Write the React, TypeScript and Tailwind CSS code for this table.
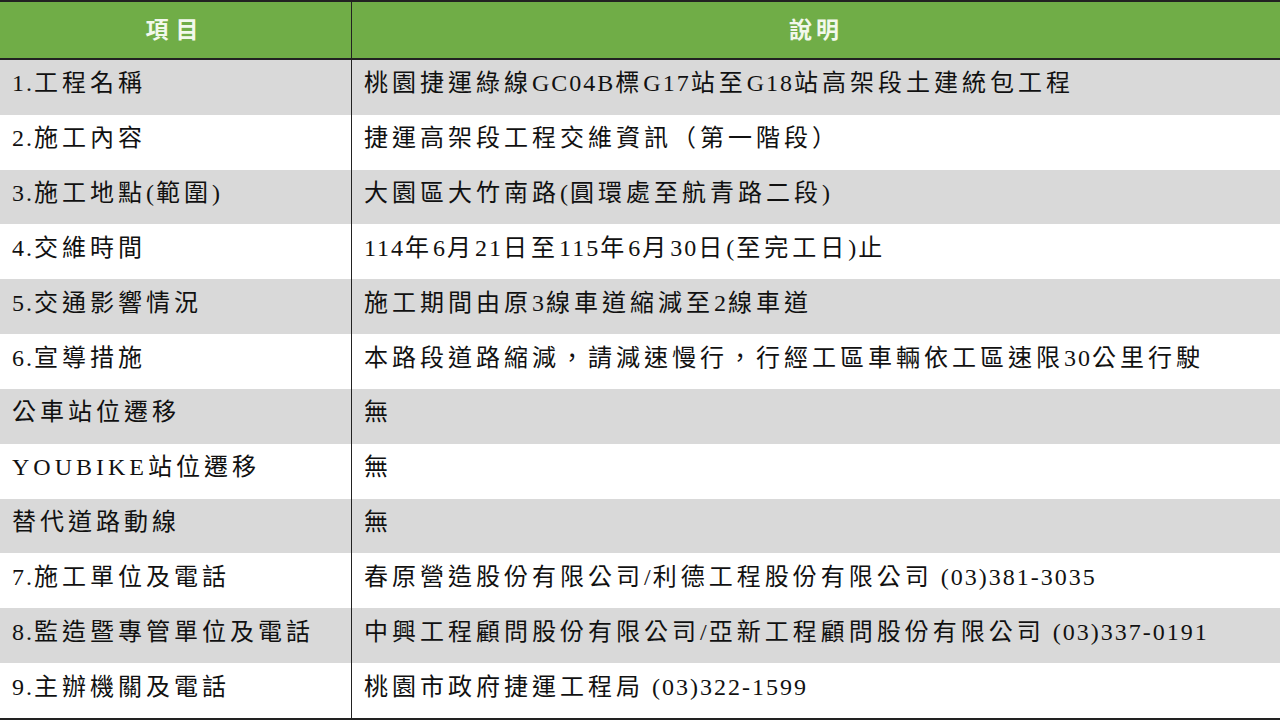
const rows: [string, string][] = [
  ["1.工程名稱", "桃園捷運綠線GC04B標G17站至G18站高架段土建統包工程"],
  ["2.施工內容", "捷運高架段工程交維資訊（第一階段）"],
  ["3.施工地點(範圍)", "大園區大竹南路(圓環處至航青路二段)"],
  ["4.交維時間", "114年6月21日至115年6月30日(至完工日)止"],
  ["5.交通影響情況", "施工期間由原3線車道縮減至2線車道"],
  ["6.宣導措施", "本路段道路縮減，請減速慢行，行經工區車輛依工區速限30公里行駛"],
  ["公車站位遷移", "無"],
  ["YOUBIKE站位遷移", "無"],
  ["替代道路動線", "無"],
  ["7.施工單位及電話", "春原營造股份有限公司/利德工程股份有限公司 (03)381-3035"],
  ["8.監造暨專管單位及電話", "中興工程顧問股份有限公司/亞新工程顧問股份有限公司 (03)337-0191"],
  ["9.主辦機關及電話", "桃園市政府捷運工程局 (03)322-1599"],
];

// latin runs are set tighter than the CJK characters
function Mixed({ text }: { text: string }) {
  const parts = text.match(/[\x20-\x7e]+|[^\x20-\x7e]+/g) ?? [];
  return (
    <span className="whitespace-pre">
      {parts.map((p, i) =>
        /^[\x20-\x7e]+$/.test(p) ? (
          <span key={i} className={/^[A-Z]+$/.test(p) ? "tracking-[4px]" : "tracking-[2px]"}>
            {p}
          </span>
        ) : (
          <span key={i} className="tracking-[4px]">
            {p}
          </span>
        )
      )}
    </span>
  );
}

export default function App() {
  return (
    <div className="w-[1280px] h-[720px] overflow-hidden bg-white flex flex-col border-t-2 border-b-2 border-[#222]">
      <div className="flex h-[58px] shrink-0 bg-[#70ad47] border-b-2 border-[#222] font-['Noto_Sans_CJK_TC',sans-serif] font-bold text-[23px] text-[#f2f8ec]">
        <div className="w-[352px] flex items-center justify-center pb-1 tracking-[7px] border-r border-[#222]">項目</div>
        <div className="flex-1 flex items-center justify-center pb-1 tracking-[4px]">說明</div>
      </div>
      {rows.map(([k, v], i) => (
        <div
          key={k}
          className={`flex flex-1 font-['Liberation_Serif','Noto_Sans_CJK_TC',serif] text-[24px] text-[#111] ${
            i % 2 === 0 ? "bg-[#d9d9d9]" : "bg-white"
          }`}
        >
          <div className="w-[352px] flex items-center pl-3 pb-2 border-r border-[#222]">
            <Mixed text={k} />
          </div>
          <div className="flex-1 flex items-center pl-3 pb-2">
            <Mixed text={v} />
          </div>
        </div>
      ))}
    </div>
  );
}
